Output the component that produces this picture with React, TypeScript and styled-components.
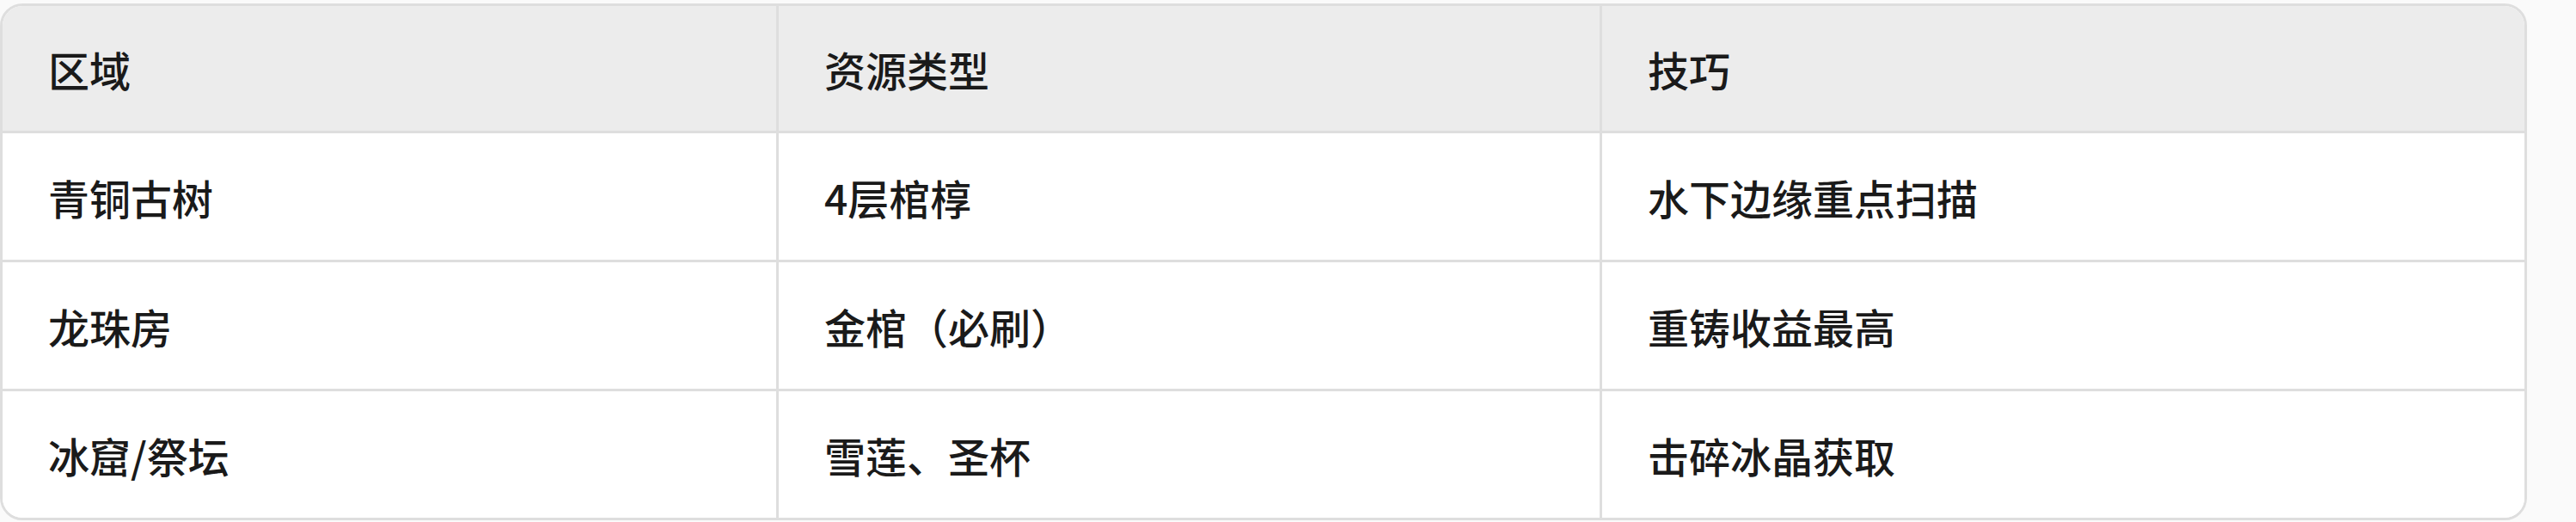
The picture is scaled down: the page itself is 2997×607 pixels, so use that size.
import React from "react";
import styled, { createGlobalStyle } from "styled-components";

const Global = createGlobalStyle`
  html, body {
    margin: 0;
    padding: 0;
    background: #fafafa;
  }
  body {
    font-family: "Noto Sans CJK SC", "Noto Sans", sans-serif;
    color: #1a1a1a;
  }
`;

const Page = styled.div`
  padding-top: 4px;
  width: 2997px;
`;

const Table = styled.div`
  width: 2940px;
  box-sizing: border-box;
  border: 3px solid #dedede;
  border-radius: 26px;
  overflow: hidden;
  background: #ffffff;
`;

const Row = styled.div<{ $head?: boolean; $last?: boolean }>`
  display: grid;
  grid-template-columns: 900px 958px 1fr;
  height: ${(p) => (p.$head ? 145 : 147)}px;
  background: ${(p) => (p.$head ? "#ececec" : "#ffffff")};
  border-bottom: ${(p) => (p.$last ? "none" : "3px solid #dedede")};
`;

const Cell = styled.div<{ $divider?: boolean }>`
  display: flex;
  align-items: center;
  padding-left: 53px;
  border-left: ${(p) => (p.$divider ? "3px solid #dedede" : "none")};
  font-size: 48px;
  font-weight: 500;
  line-height: 72px;
  white-space: nowrap;
`;

const header = ["区域", "资源类型", "技巧"];
const rows = [
  ["青铜古树", "4层棺椁", "水下边缘重点扫描"],
  ["龙珠房", "金棺（必刷）", "重铸收益最高"],
  ["冰窟/祭坛", "雪莲、圣杯", "击碎冰晶获取"],
];

export default function App() {
  return (
    <Page>
      <Global />
      <Table>
        <Row $head>
          {header.map((h, i) => (
            <Cell key={h} $divider={i > 0}>
              {h}
            </Cell>
          ))}
        </Row>
        {rows.map((r, ri) => (
          <Row key={ri} $last={ri === rows.length - 1}>
            {r.map((c, i) => (
              <Cell key={i} $divider={i > 0}>
                {c}
              </Cell>
            ))}
          </Row>
        ))}
      </Table>
    </Page>
  );
}
